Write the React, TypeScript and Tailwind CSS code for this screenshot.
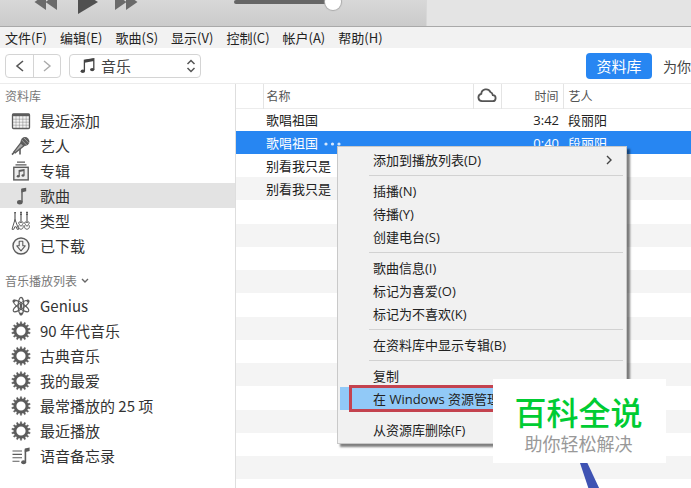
import type { ReactNode } from 'react'
import { useState } from 'react'

type Song = {
  name: string
  time?: string
  artist?: string
}

type IconProps = { children: ReactNode }

const menus = [
  ['文件', 'F'],
  ['编辑', 'E'],
  ['歌曲', 'S'],
  ['显示', 'V'],
  ['控制', 'C'],
  ['帐户', 'A'],
  ['帮助', 'H'],
]

const songs: Song[] = [
  { name: '歌唱祖国', time: '3:42', artist: '段丽阳' },
  { name: '歌唱祖国', time: '0:40', artist: '段丽阳' },
  { name: '别看我只是' },
  { name: '别看我只是' },
]

const emptyRows = Array.from({ length: 13 }, (_, index) => index)

const contextGroups = [
  ['添加到播放列表(D)'],
  ['插播(N)', '待播(Y)', '创建电台(S)'],
  ['歌曲信息(I)', '标记为喜爱(O)', '标记为不喜欢(K)'],
  ['在资料库中显示专辑(B)'],
  ['复制', '在 Windows 资源管理器中显示'],
  ['从资源库删除(F)'],
]

const gearTeeth = Array.from({ length: 14 }, (_, index) => (index * 360) / 14)

function Icon({ children }: IconProps) {
  return (
    <svg viewBox="0 0 20 20" className="size-5 shrink-0" fill="none" stroke="currentColor" aria-hidden="true">
      {children}
    </svg>
  )
}

function CalendarIcon() {
  return (
    <Icon>
      <rect x="1.5" y="3" width="17" height="14.5" rx="1" strokeWidth="1.3" fill="#f3f3f3" />
      <path d="M1.5 4h17" strokeWidth="2.4" />
      <path d="M5 5v12M8.4 5v12M11.8 5v12M15.2 5v12M2 8.2h16M2 11.2h16M2 14.2h16" strokeWidth="0.6" opacity="0.6" />
    </Icon>
  )
}

function MicIcon() {
  return (
    <Icon>
      <circle cx="14" cy="5.5" r="4.4" fill="currentColor" stroke="none" />
      <path d="M10.6 3.8l5.4 5.6M12.8 1.8l4.8 5" stroke="#ccc" strokeWidth="0.6" />
      <path d="M9.8 6.8L3 15.6l1.2 1.2L13 9.8z" fill="#aaa" strokeWidth="1.3" />
      <path d="M3.6 15.8L1 18.6M9 12.8v5.6" strokeWidth="1.6" />
    </Icon>
  )
}

function AlbumIcon() {
  return (
    <Icon>
      <path d="M6 1.2h8M4.5 3.8h11" strokeWidth="1.3" />
      <rect x="2.8" y="6.3" width="14.4" height="12.6" strokeWidth="1.4" fill="#ececec" />
      <path d="M8.2 15V9.6l4.8-.8v5.4" strokeWidth="1.2" />
      <path d="M8.2 10.2l4.8-.8" strokeWidth="1.4" />
      <ellipse cx="7.2" cy="15.2" rx="1.5" ry="1.2" fill="currentColor" stroke="none" />
      <ellipse cx="12" cy="14.5" rx="1.5" ry="1.2" fill="currentColor" stroke="none" />
    </Icon>
  )
}

function SongIcon() {
  return (
    <Icon>
      <path d="M11 16V3" strokeWidth="1.4" />
      <path d="M10.4 2.6l4.8-.9v3.6l-4.8 1.2z" fill="currentColor" stroke="none" />
      <ellipse cx="8.8" cy="16.2" rx="2.8" ry="2.2" fill="currentColor" stroke="none" />
    </Icon>
  )
}

function GuitarsIcon() {
  return (
    <Icon>
      <path d="M4 1.5v9M10 1v10M16 1v10" strokeWidth="1.2" />
      <path d="M3.2 1.6h1.8M9 1.4h2M15 1.4h2M9 3.4h2M15 3.4h2" strokeWidth="1.3" />
      <path d="M4 8.5L1 18.3h1.8l1-2.5h1.5l.8 2.5h1.6z" strokeWidth="1" />
      <path d="M8.2 10.8c.8 1 2.6 1 3.4 0 1 .8.6 2-.2 2.8 1.6 1.6.8 4.6-1.5 4.6s-3-3-1.4-4.6c-.8-.8-1.2-2-.3-2.8z" strokeWidth="1" />
      <path d="M14.2 10.8c.8 1 2.6 1 3.4 0 1 .8.6 2-.2 2.8 1.8 1.6 1 4.6-1.5 4.6s-3-3-1.4-4.6c-.8-.8-1.2-2-.3-2.8z" strokeWidth="1" />
      <path d="M9 14.8h2M15 14.8h2" strokeWidth="1" />
    </Icon>
  )
}

function DownloadedIcon() {
  return (
    <Icon>
      <circle cx="10" cy="10" r="8" strokeWidth="1.4" fill="#f5f5f5" />
      <path d="M8.2 5.2h3.6v4.6h2.4L10 14.8 5.8 9.8h2.4z" strokeWidth="1.1" strokeLinejoin="round" />
    </Icon>
  )
}

// Upright loop crossed by two orbits with small electrons
function GeniusIcon() {
  return (
    <Icon>
      <ellipse cx="10" cy="10" rx="2.8" ry="8.6" strokeWidth="1.2" />
      <ellipse cx="10" cy="10" rx="2.8" ry="9.2" strokeWidth="1.1" transform="rotate(56 10 10)" />
      <ellipse cx="10" cy="10" rx="2.8" ry="9.2" strokeWidth="1.1" transform="rotate(-56 10 10)" />
      <ellipse cx="10" cy="10" rx="1.3" ry="2.4" fill="currentColor" stroke="none" />
      <circle cx="3" cy="5" r="1.5" fill="currentColor" stroke="none" />
      <circle cx="17" cy="5" r="1.5" fill="currentColor" stroke="none" />
      <circle cx="10" cy="18" r="1.5" fill="currentColor" stroke="none" />
    </Icon>
  )
}

function GearIcon() {
  return (
    <Icon>
      <circle cx="10" cy="10" r="6" strokeWidth="2.8" />
      {gearTeeth.map((angle) => (
        <path key={angle} d="M9 3.6L9.4 .7h1.2L11 3.6z" fill="currentColor" strokeWidth="0.4" transform={`rotate(${angle} 10 10)`} />
      ))}
    </Icon>
  )
}

function PlaylistIcon() {
  return (
    <Icon>
      <path d="M1.5 5h9.5M1.5 8.4h9.5M1.5 11.8h9.5M1.5 15.2h7" strokeWidth="1.1" />
      <path d="M14.4 16V3.4" strokeWidth="1.6" />
      <path d="M13.8 2.6l4.8-1v3.4l-4.8 1.2z" fill="currentColor" stroke="none" />
      <ellipse cx="12.6" cy="16.2" rx="2.5" ry="2" fill="currentColor" stroke="none" />
    </Icon>
  )
}

const libraryItems = [
  { label: '最近添加', icon: <CalendarIcon /> },
  { label: '艺人', icon: <MicIcon /> },
  { label: '专辑', icon: <AlbumIcon /> },
  { label: '歌曲', icon: <SongIcon /> },
  { label: '类型', icon: <GuitarsIcon /> },
  { label: '已下载', icon: <DownloadedIcon /> },
]

const playlistItems = [
  { label: 'Genius', icon: <GeniusIcon /> },
  { label: '90 年代音乐', icon: <GearIcon /> },
  { label: '古典音乐', icon: <GearIcon /> },
  { label: '我的最爱', icon: <GearIcon /> },
  { label: '最常播放的 25 项', icon: <GearIcon /> },
  { label: '最近播放', icon: <GearIcon /> },
  { label: '语音备忘录', icon: <PlaylistIcon /> },
]

function Player() {
  const [volume, setVolume] = useState(100)

  return (
    <header className="flex h-[27px] items-end overflow-hidden border-b border-[#a9a9a9] bg-linear-to-b from-[#d8d8d8] to-[#cbcbcb]">
      <div className="flex h-12 w-[426px] shrink-0 items-center pl-[34px] text-[#505050]">
        <button type="button" aria-label="上一首" className="w-6">
          <svg viewBox="0 0 24 18" className="h-[18px] w-6" fill="#6a6a6a">
            <path d="M12 1v16L.5 9zM23 1v16L11.5 9z" />
          </svg>
        </button>
        <button type="button" aria-label="播放" className="ml-5 w-5">
          <svg viewBox="0 0 20 24" className="h-6 w-5" fill="currentColor">
            <path d="M0 0l20 12L0 24z" />
          </svg>
        </button>
        <button type="button" aria-label="下一首" className="ml-4 w-6">
          <svg viewBox="0 0 24 18" className="h-[18px] w-6" fill="#6a6a6a">
            <path d="M1 1v16l11.5-8zM12 1v16l11.5-8z" />
          </svg>
        </button>
        <input
          type="range"
          aria-label="音量"
          value={volume}
          onChange={(event) => setVolume(Number(event.target.value))}
          className="ml-24 h-1 w-[107px] appearance-none rounded-full bg-[#666] [&::-webkit-slider-thumb]:size-4 [&::-webkit-slider-thumb]:appearance-none [&::-webkit-slider-thumb]:rounded-full [&::-webkit-slider-thumb]:bg-white [&::-webkit-slider-thumb]:shadow-[0_0_1px_1px_#aaa]"
        />
      </div>
      <div className="h-12 flex-1 border-l border-[#d8d8d8] bg-[#e4e4e4]" />
    </header>
  )
}

function MenuBar() {
  return (
    <nav className="flex h-[21px] items-center gap-[13px] bg-[#f2f2f2] pl-[5px] font-['Liberation_Sans_Narrow','Noto_Sans_CJK_SC',sans-serif] text-[13px] leading-5 text-[#222]">
      {menus.map(([label, key]) => (
        <button key={key} type="button" className="whitespace-nowrap">{label}({key})</button>
      ))}
    </nav>
  )
}

function Toolbar() {
  return (
    <div className="flex h-9 items-center overflow-hidden border-b border-[#ececec] bg-white text-[#444]">
      <div className="ml-[5px] flex h-6 rounded border border-[#d4d4d4]">
        <button type="button" aria-label="后退" className="flex w-7 items-center justify-center border-r border-[#d4d4d4]">
          <svg viewBox="0 0 10 12" className="h-3 w-2.5" fill="none" stroke="#555" strokeWidth="1.6"><path d="M8 1L2 6l6 5" /></svg>
        </button>
        <button type="button" aria-label="前进" className="flex w-[26px] items-center justify-center">
          <svg viewBox="0 0 10 12" className="h-3 w-2.5" fill="none" stroke="#aaa" strokeWidth="1.4"><path d="M2 1l6 5-6 5" /></svg>
        </button>
      </div>
      <label className="relative ml-2 flex h-6 w-[132px] items-center">
        <svg viewBox="0 0 16 16" className="pointer-events-none absolute left-[11px] size-4" fill="none" stroke="#444" aria-hidden="true">
          <path d="M4.4 13V2.4l9.4-1.6v10.6" strokeWidth="1.3" />
          <path d="M4.4 3.4l9.4-1.6" strokeWidth="2.6" />
          <ellipse cx="2.8" cy="13.2" rx="2.2" ry="1.7" fill="#444" stroke="none" />
          <ellipse cx="12.2" cy="11.6" rx="2.2" ry="1.7" fill="#444" stroke="none" />
        </svg>
        <select aria-label="媒体类型" className="h-6 w-full appearance-none rounded border border-[#d4d4d4] bg-white pl-[31px] text-[15px] leading-5">
          <option>音乐</option>
        </select>
        <svg viewBox="0 0 10 14" className="pointer-events-none absolute right-[5px] h-3.5 w-2.5" fill="none" stroke="#555" strokeWidth="1.5" aria-hidden="true">
          <path d="M1.5 5L5 1.5 8.5 5M1.5 9L5 12.5 8.5 9" />
        </svg>
      </label>
      <div className="ml-auto flex shrink-0 items-center leading-5">
        <button type="button" className="h-[26px] w-[66px] rounded bg-[#2786f2] text-[15px] text-white">资料库</button>
        <button type="button" className="ml-[11px] w-7 whitespace-nowrap text-left text-sm">为你</button>
      </div>
    </div>
  )
}

function SidebarList({ items, selected }: { items: typeof libraryItems; selected?: string }) {
  return (
    <ul>
      {items.map((item) => (
        <li key={item.label}>
          <a
            href="#"
            className={`flex h-[25px] items-center gap-[9px] pl-[11px] text-[15px] leading-5 text-[#333] ${item.label === selected ? 'bg-[#e3e3e3]' : ''}`}
          >
            <span className="text-[#5c5c5c]">{item.icon}</span>
            {item.label}
          </a>
        </li>
      ))}
    </ul>
  )
}

function Sidebar() {
  return (
    <aside className="w-[236px] shrink-0 border-r border-[#dedede] bg-white">
      <h2 className="flex h-6 items-center pl-[5px] text-xs text-[#777]">资料库</h2>
      <SidebarList items={libraryItems} selected="歌曲" />
      <h2 className="mt-[11px] flex h-6 items-center gap-1 pl-[5px] text-xs text-[#777]">
        音乐播放列表
        <svg viewBox="0 0 8 6" className="h-1.5 w-2" fill="none" stroke="#666" strokeWidth="1.4"><path d="M1 1l3 3 3-3" /></svg>
      </h2>
      <SidebarList items={playlistItems} />
    </aside>
  )
}

function SongTable() {
  const selectedIndex = 1

  return (
    <table className="w-full table-fixed border-collapse text-left text-[13px] leading-5 text-[#222]">
      <thead className="text-xs text-[#555]">
        <tr className="h-6 border-b border-[#ececec]">
          <th className="w-[27px] border-r border-[#e4e4e4]" aria-label="状态" />
          <th className="pl-[3px] font-normal">名称</th>
          <th className="w-7 border-x border-[#e4e4e4]" aria-label="云端">
            <svg viewBox="0 0 20 15" className="mx-auto h-[15px] w-5" fill="none" stroke="#555" strokeWidth="1.8">
              <path d="M5 13.2a3.7 3.7 0 0 1-.7-7.3A4.8 4.8 0 0 1 13.4 4a4 4 0 0 1 2.4 3.2 3 3 0 0 1-.4 6z" />
            </svg>
          </th>
          <th className="w-[62px] border-r border-[#e4e4e4] pr-1 text-right font-normal">时间</th>
          <th className="w-32 pl-[5px] font-normal">艺人</th>
        </tr>
      </thead>
      <tbody>
        {songs.map((song, index) => (
          <tr key={index} className={index === selectedIndex ? 'h-[23px] bg-[#2786f2] text-white' : 'h-[23px] even:bg-[#f4f4f4]'}>
            <td />
            <td className="whitespace-nowrap pl-[3px]">
              {song.name}
              {index === selectedIndex ? (
                <svg viewBox="0 0 17 4" className="ml-1.5 inline-block h-1 w-[17px]" fill="#d8e9fd">
                  <circle cx="2" cy="2" r="1.6" />
                  <circle cx="8.5" cy="2" r="1.6" />
                  <circle cx="15" cy="2" r="1.6" />
                </svg>
              ) : null}
            </td>
            <td />
            <td className="pr-1 text-right font-['Open_Sans',sans-serif]">{song.time}</td>
            <td className="pl-[5px]">{song.artist}</td>
          </tr>
        ))}
        {emptyRows.map((row) => (
          <tr key={row} className="h-[23px] even:bg-[#f4f4f4] nth-[4n+1]:h-6">
            <td colSpan={5} />
          </tr>
        ))}
      </tbody>
    </table>
  )
}

function ContextMenu() {
  return (
    <div
      role="menu"
      className="absolute top-[146px] left-[337px] w-[290px] border border-[#c9c9c9] bg-[#f1f1f1] pt-px pb-0.5 font-['Open_Sans','Noto_Sans_CJK_SC',sans-serif] text-[13px] leading-5 text-[#222] shadow-[3px_3px_2px_rgba(0,0,0,0.5)]"
    >
      {contextGroups.map((group, index) => (
        <div key={group[0]}>
          {index > 0 ? <div role="separator" className="mr-[3px] ml-[31px] flex h-2 items-center"><div className={index === 5 ? 'h-px' : 'h-px flex-1 bg-[#d2d2d2]'} /></div> : null}
          {group.map((label) => {
            const active = label.startsWith('在 Windows')
            return (
              <button
                key={label}
                type="button"
                role="menuitem"
                className={`mx-0.5 flex h-[23px] w-[284px] items-center whitespace-nowrap pl-[33px] ${active ? 'relative bg-[#91c9f7]' : ''}`}
              >
                {label}
                {index === 0 ? (
                  <svg viewBox="0 0 6 10" className="mr-3 ml-auto h-2.5 w-1.5" fill="none" stroke="#444" strokeWidth="1.4"><path d="M1 1l4 4-4 4" /></svg>
                ) : null}
                {active ? <span className="absolute -inset-y-0.5 right-2 left-[9px] border-3 border-[#c4434f]" /> : null}
              </button>
            )
          })}
        </div>
      ))}
    </div>
  )
}

function Watermark() {
  return (
    <>
      <svg viewBox="0 0 30 30" className="absolute top-[460px] left-[575px] size-[30px]" fill="#3f53b3" aria-hidden="true">
        <path d="M4 0h7l14 30H14z" />
      </svg>
      <div className="absolute top-[379px] left-[493px] flex h-[84px] w-[173px] flex-col items-center bg-white pt-3.5 pr-0.5">
        <p className="text-[32px] leading-9 font-medium text-[#00cc33]">百科全说</p>
        <p className="text-lg leading-7 text-[#999]">助你轻松解决</p>
      </div>
    </>
  )
}

export default function App() {
  return (
    <div lang="zh-CN" className="relative flex h-screen flex-col overflow-hidden bg-white font-['Noto_Sans_CJK_SC',sans-serif]">
      <Player />
      <MenuBar />
      <Toolbar />
      <div className="flex min-h-0 flex-1">
        <Sidebar />
        <main className="min-w-0 flex-1 overflow-hidden">
          <SongTable />
        </main>
      </div>
      <ContextMenu />
      <Watermark />
    </div>
  )
}
